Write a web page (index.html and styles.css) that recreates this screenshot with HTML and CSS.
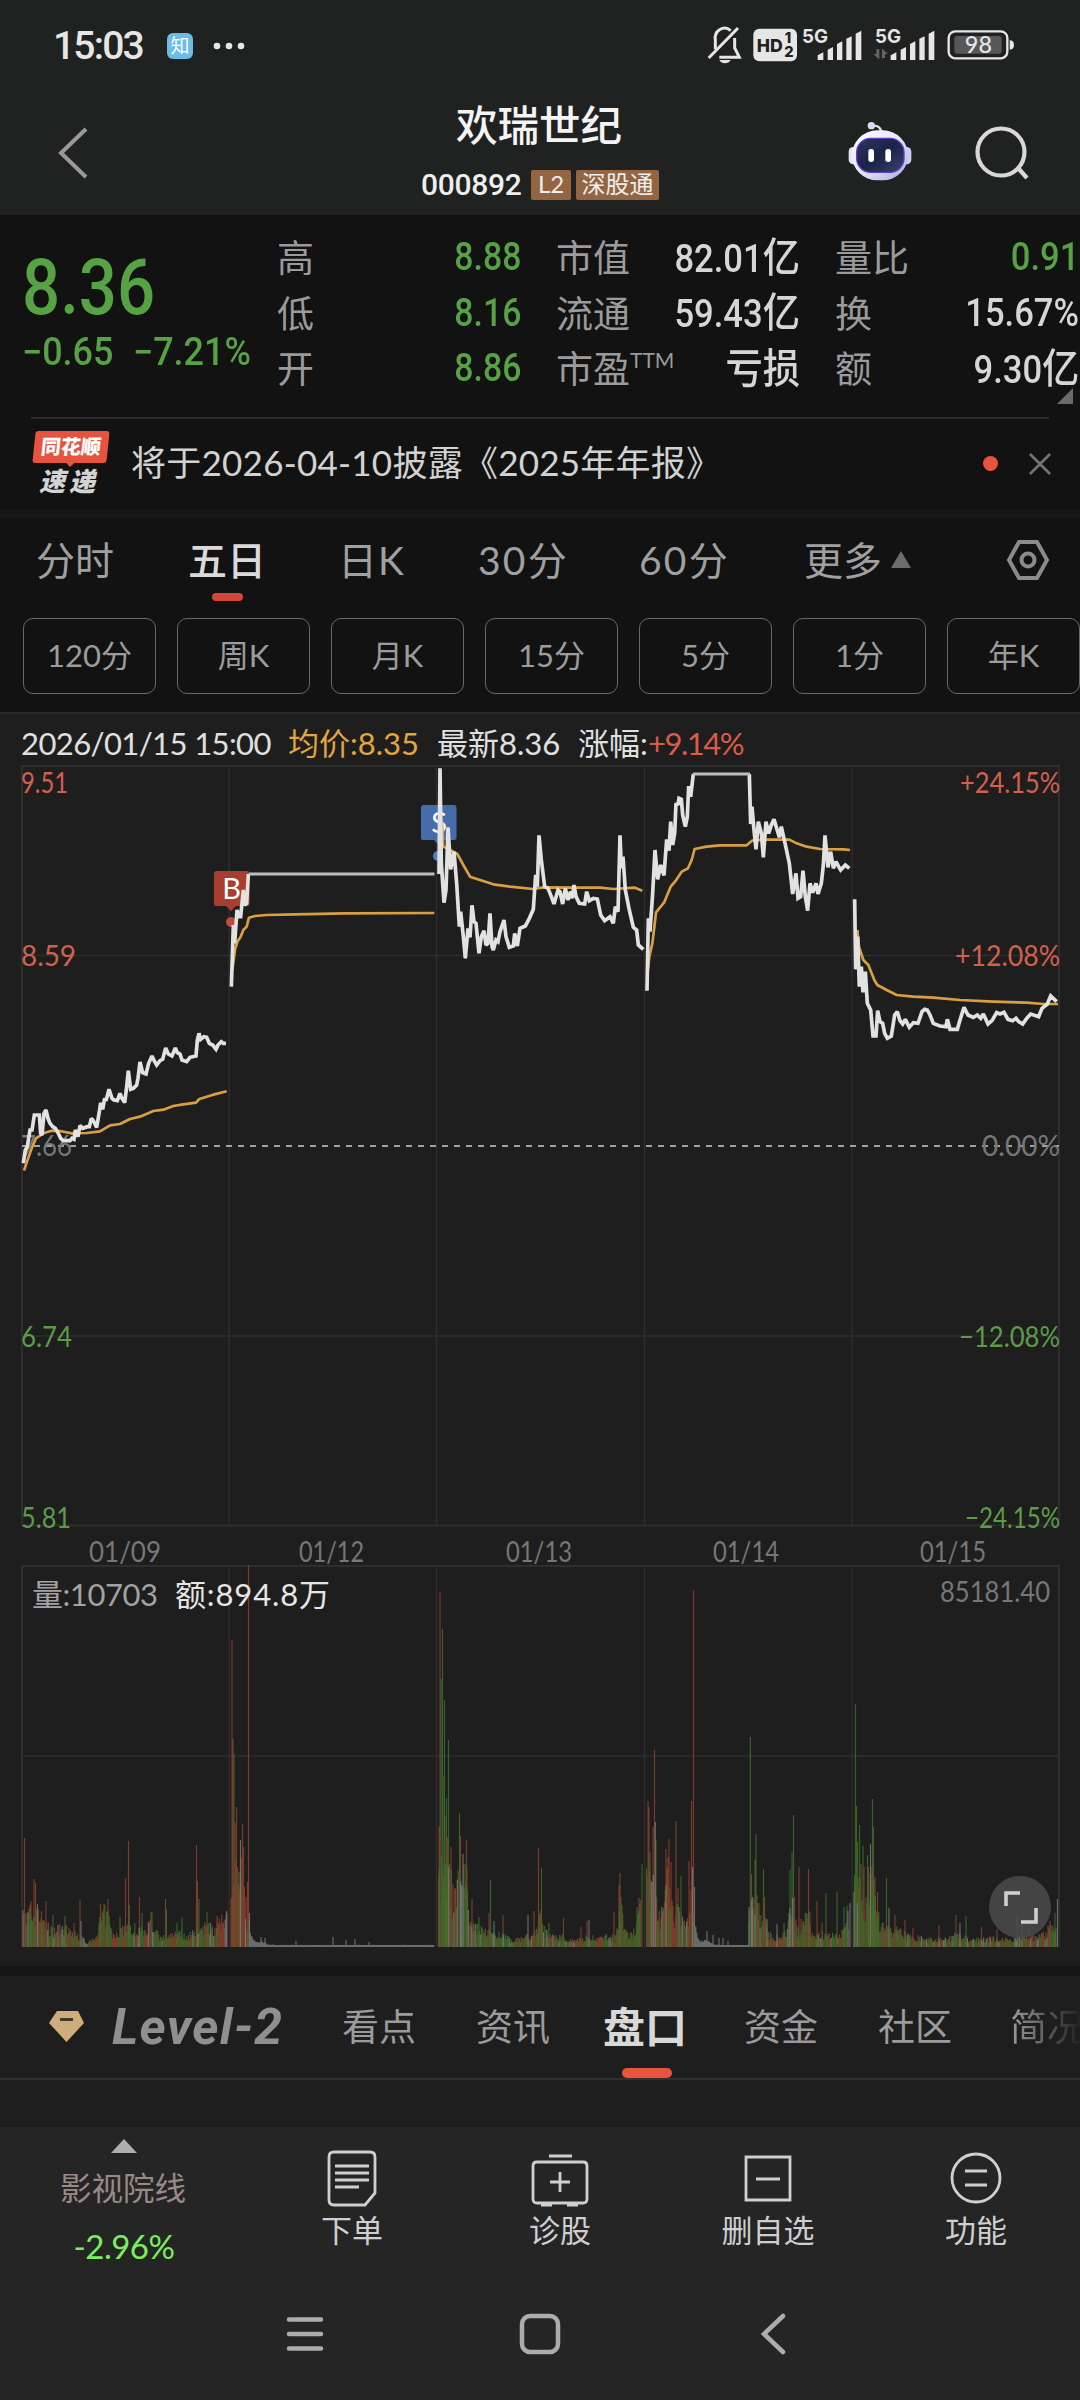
FILE: index.html
```html
<!DOCTYPE html>
<html lang="zh-CN">
<head>
<meta charset="utf-8">
<title>欢瑞世纪 000892</title>
<link rel="stylesheet" href="styles.css">
</head>
<body>
<header class="top">
  <div class="status">
    <span class="clock">15:03</span>
    <span class="app-badge">知</span>
    <svg class="dots" width="34" height="10" viewBox="0 0 34 10"><circle cx="4" cy="5" r="3.3"/><circle cx="16" cy="5" r="3.3"/><circle cx="28" cy="5" r="3.3"/></svg>
    <svg class="status-icons" width="312" height="40" viewBox="0 0 936 120">
      <g fill="none" stroke="#e6e6e6" stroke-width="9">
        <path d="M22 70V42a28 30 0 0 1 46-28M80 36v30l14 28H34"/>
        <path d="M2 96L90 6"/>
      </g>
      <path d="M34 102h34q-6 10-17 10t-17-10z" fill="#e6e6e6"/>
      <rect x="136" y="8" width="131" height="98" rx="18" fill="#e6e6e6"/>
      <g class="st-hd"><text x="146" y="77" font-size="54" textLength="78" lengthAdjust="spacingAndGlyphs">HD</text><text x="230" y="51" font-size="44">1</text><text x="229" y="92" font-size="44">2</text></g>
      <g class="st-5g"><text x="282" y="51" font-size="56" textLength="78" lengthAdjust="spacingAndGlyphs">5G</text><text x="501" y="51" font-size="56" textLength="78" lengthAdjust="spacingAndGlyphs">5G</text></g>
      <g fill="#e6e6e6">
        <path d="M329 102V88l17-9v23zM359 102V71l16-8v39zM387 102V54l16-8v56zM415 102V38l16-7v71zM443 102V23l17-9v88z"/>
        <path d="M548 102V88l17-9v23zM578 102V71l16-8v39zM606 102V54l16-8v56zM634 102V38l16-7v71zM662 102V23l17-9v88z"/>
      </g>
      <path d="M496 84h9V70h9v30zM522 96V68l18 16h-9v12z" fill="#666"/>
      <rect x="722" y="16" width="176" height="81" rx="20" fill="none" stroke="#e6e6e6" stroke-width="7"/>
      <rect x="739" y="30" width="142" height="53" rx="9" fill="#585858"/>
      <path d="M905 43q13 0 13 14t-13 14z" fill="#e6e6e6"/>
      <text class="st-bat" x="811" y="82" font-size="70" text-anchor="middle" textLength="82">98</text>
    </svg>
  </div>
  <div class="titlebar">
    <svg class="back" width="40" height="60" viewBox="0 0 40 60"><path d="M31 6L6 30l25 24"/></svg>
    <div class="title">
      <h1>欢瑞世纪</h1>
      <div class="code"><span class="code-no">000892</span><span class="tag">L2</span><span class="tag tag-wide">深股通</span></div>
    </div>
    <svg class="robot" width="64" height="60" viewBox="0 0 192 180">
      <defs>
        <linearGradient id="shell" x1="0" y1="0" x2="1" y2="1"><stop offset="0" stop-color="#fff"/><stop offset=".55" stop-color="#e4e2f6"/><stop offset="1" stop-color="#a8a4e0"/></linearGradient>
        <linearGradient id="face" x1="0" y1="0" x2="1" y2="1"><stop offset="0" stop-color="#2d3560"/><stop offset=".5" stop-color="#1c2347"/><stop offset="1" stop-color="#3a4170"/></linearGradient>
      </defs>
      <path d="M72 14q26-2 28 20" fill="none" stroke="#dcdaf0" stroke-width="7"/>
      <circle cx="70" cy="14" r="11" fill="#dddaf2"/>
      <rect x="2" y="78" width="30" height="52" rx="14" fill="#e6e5f8"/><rect x="160" y="78" width="30" height="52" rx="14" fill="#cfcdf0"/>
      <rect x="12" y="28" width="168" height="150" rx="76" fill="url(#shell)"/>
      <rect x="26" y="52" width="142" height="102" rx="42" fill="url(#face)" stroke="#5a3fc0" stroke-width="4"/>
      <rect x="61" y="84" width="17" height="39" rx="8" fill="#fff"/><rect x="112" y="84" width="17" height="39" rx="8" fill="#fff"/>
    </svg>
    <svg class="search" width="56" height="56" viewBox="0 0 56 56"><circle cx="27" cy="27" r="23.5"/><path d="M44 43l9 10"/></svg>
  </div>
</header>

<section class="quote">
  <div class="price">
    <div class="last"><span>8.36</span></div>
    <div class="change"><span>−0.65</span><span>−7.21%</span></div>
  </div>
  <dl class="stats c1">
    <div><dt>高</dt><dd class="green">8.88</dd></div>
    <div><dt>低</dt><dd class="green">8.16</dd></div>
    <div><dt>开</dt><dd class="green">8.86</dd></div>
  </dl>
  <dl class="stats c2">
    <div><dt>市值</dt><dd>82.01<b>亿</b></dd></div>
    <div><dt>流通</dt><dd>59.43<b>亿</b></dd></div>
    <div><dt>市盈<sup>TTM</sup></dt><dd><b>亏损</b></dd></div>
  </dl>
  <dl class="stats c3">
    <div><dt>量比</dt><dd class="green">0.91</dd></div>
    <div><dt>换</dt><dd>15.67%</dd></div>
    <div><dt>额</dt><dd>9.30<b>亿</b></dd></div>
  </dl>
  <i class="corner"></i>
</section>

<section class="news">
  <div class="news-logo"><span class="logo-top">同花顺</span><span class="logo-bottom">速递</span></div>
  <p>将于2026-04-10披露《2025年年报》</p>
  <i class="dot"></i>
  <svg width="22" height="22" viewBox="0 0 22 22"><path d="M1 1l20 20M21 1L1 21"/></svg>
</section>

<section class="period">
  <nav class="tabs">
    <span>分时</span><span class="on">五日</span><span>日K</span><span>30分</span><span>60分</span><span class="more">更多</span><i class="up"></i>
    <svg width="42" height="40" viewBox="0 0 42 40"><path d="M12 2h18l10 18-10 18H12L2 20z"/><circle cx="21" cy="20" r="6.5"/></svg>
  </nav>
  <div class="chips"><span>120分</span><span>周K</span><span>月K</span><span>15分</span><span>5分</span><span>1分</span><span>年K</span></div>
</section>

<section class="chart">
  <div class="info"><span class="i1">2026/01/15 15:00</span><span class="i2">均价:8.35</span><span class="i3">最新8.36</span><span class="i4">涨幅:</span><span class="i5">+9.14%</span></div>
  <svg class="plot" width="1080" height="1202" viewBox="0 764 1080 1202">
    <g class="grid">
      <path d="M22 766H1059V1525.5H22zM22 1566H1059V1947M22 1566V1947" stroke-width="2"/>
      <path d="M22 955.5H1059M22 1336H1059M22 1756H1059M229 766V1525M436.5 766V1525M644.5 766V1525M852 766V1525M229 1566V1947M436.5 1566V1947M644.5 1566V1947M852 1566V1947" stroke-width="1.4"/>
    </g>
    <path class="base" d="M22 1146H1059"/>
    <g class="marks">
      <path fill="#a93d30" d="M216 871h31q2.500 0 2.500 2.500v30q0 2.500-2.500 2.500h-11l-5 5-5-5h-10q-2 0-2-2.500v-30q0-2.500 2-2.500z"/>
      <circle cx="231" cy="922" r="5" fill="#c04a3c"/>
      <path fill="#466ca9" d="M423 805h31q2.500 0 2.500 2.500v30q0 2.500-2.500 2.500h-9l-6 5-5-5h-11q-2 0-2-2.500v-30q0-2.500 2-2.500z"/>
      <circle cx="438" cy="856" r="5" fill="#5180c6"/>
      <text x="231.500" y="899" text-anchor="middle">B</text><text x="439" y="833" text-anchor="middle">S</text>
    </g>
    <g class="axis">
      <text class="red" x="21" y="793" textLength="47" lengthAdjust="spacingAndGlyphs">9.51</text>
      <text class="red" x="21" y="966" textLength="55" lengthAdjust="spacingAndGlyphs">8.59</text>
      <text class="gray" x="21" y="1156" textLength="51" lengthAdjust="spacingAndGlyphs">7.66</text>
      <text class="green" x="21" y="1347" textLength="51" lengthAdjust="spacingAndGlyphs">6.74</text>
      <text class="green" x="21" y="1528" textLength="50" lengthAdjust="spacingAndGlyphs">5.81</text>
      <text class="red" x="960" y="793" textLength="100" lengthAdjust="spacingAndGlyphs">+24.15%</text>
      <text class="red" x="955" y="966" textLength="105" lengthAdjust="spacingAndGlyphs">+12.08%</text>
      <text class="gray" x="982" y="1156" textLength="78" lengthAdjust="spacingAndGlyphs">0.00%</text>
      <text class="green" x="959" y="1347" textLength="101" lengthAdjust="spacingAndGlyphs">−12.08%</text>
      <text class="green" x="965" y="1528" textLength="95" lengthAdjust="spacingAndGlyphs">−24.15%</text>
      <g class="gray">
        <text x="89" y="1562" textLength="72" lengthAdjust="spacingAndGlyphs">01/09</text><text x="299" y="1562" textLength="65" lengthAdjust="spacingAndGlyphs">01/12</text><text x="506" y="1562" textLength="66" lengthAdjust="spacingAndGlyphs">01/13</text><text x="713" y="1562" textLength="66" lengthAdjust="spacingAndGlyphs">01/14</text><text x="920" y="1562" textLength="66" lengthAdjust="spacingAndGlyphs">01/15</text>
        <text x="940" y="1602" textLength="110" lengthAdjust="spacingAndGlyphs">85181.40</text>
      </g>
    </g>
    <g class="avg">
      <path transform="translate(0 750) scale(.33333)" d="M72 1262L82 1232 95 1195 108 1165 130 1150 155 1142 180 1143 215 1150 260 1149 300 1144 330 1126 360 1122 390 1107 420 1100 460 1083 490 1079 520 1068 550 1063 588 1058 598 1047 640 1034 680 1024M697 660L705 600 712 575 722 560 730 540 740 530 747 503 765 498 800 495 885 493 1035 490 1303 489"/>
      <path transform="translate(420 750) scale(.33333)" d="M66 215L70 290 90 300 112 312 130 345 150 380 180 390 220 403 270 410 340 417 370 412 470 413 540 413 580 417 645 413 667 422M684 660L688 620 697 580 702 540 708 487 732 458 752 410 765 395 785 365 804 355 815 330 824 297 860 290 900 286 980 286 996 272 1030 269 1108 269 1130 280 1160 290 1200 297 1270 298 1290 300"/>
      <path transform="translate(640 750) scale(.33333)" d="M652 540L657 590 670 630 685 645 703 690 712 705 740 720 770 735 820 740 880 743 960 750 1060 755 1160 758 1210 762 1254 762"/>
    </g>
    <g class="line">
      <path transform="translate(0 750) scale(.33333)" d="M70 1240L76 1200 82 1190 90 1140 96 1140 103 1095 118 1095 122 1150 126 1155 132 1090 138 1080 144 1105 150 1120 158 1130 166 1135 175 1150 182 1165 190 1172 210 1172 216 1165 222 1168 226 1140 234 1160 240 1127 248 1135 262 1130 268 1130 274 1105 280 1112 290 1132 298 1085 302 1058 308 1078 314 1045 318 1052 327 1018 336 1045 342 1050 352 1052 360 1030 366 1045 374 1058 380 1010 385 962 392 1018 400 1015 410 1005 414 985 420 936 428 968 438 972 446 940 456 918 464 935 470 945 480 932 488 928 497 894 505 912 516 918 526 894 532 908 540 912 546 930 560 935 570 922 588 918 592 870 597 850 602 868 612 860 620 862 628 880 638 885 648 898 654 885 664 875 670 880 678 880M694 710L697 620 700 525 704 580 711 480 716 500 722 500 730 420 734 465 740 460 745 372"/>
      <path transform="translate(420 750) scale(.33333)" d="M57 372L60 55 64 340 72 458 78 420 84 232 92 358 102 305 110 400 118 530 122 485 130 560 136 625 144 535 150 562 156 466 162 515 168 520 177 610 184 560 192 542 198 585 204 580 210 490 216 590 220 600 228 570 234 575 240 545 252 510 258 560 268 592 280 588 284 550 292 588 300 535 316 528 328 505 340 478 347 375 352 410 357 256 364 330 374 410 384 415 394 440 402 462 414 420 420 425 428 462 436 415 444 450 452 425 456 445 462 405 468 440 478 460 494 462 500 425 508 452 520 445 532 447 542 495 554 512 570 500 580 520 586 470 594 485 600 256 604 355 609 320 616 420 628 480 640 532 650 540 655 585 670 598M681 722L685 505 690 545 698 430 705 300 713 388 722 345 732 376 740 268 747 302 752 215 758 285 764 250 768 160 774 165 777 145 784 148 788 195 796 230 802 200 806 108 812 140 820 72M988 72L992 222 996 170 1002 240 1008 298 1015 215 1024 250 1030 322 1038 215 1046 250 1054 225 1062 208 1070 235 1078 262 1084 230 1094 275 1108 340 1118 432 1128 370 1134 445 1142 440 1149 362 1156 440 1163 482 1170 400 1178 428 1188 400 1194 432 1204 400 1210 345 1215 256 1224 352 1232 305 1240 355 1248 335 1256 350 1262 360 1276 345 1288 355"/>
      <path transform="translate(640 750) scale(.33333)" d="M644 448L647 658 653 560 658 710 664 650 669 727 676 665 682 760 692 780 699 858 708 858 713 782 720 815 728 820 734 850 742 865 754 858 764 795 772 785 780 812 788 822 796 808 808 832 820 818 834 820 846 785 854 778 862 780 870 795 880 820 900 828 918 830 922 808 930 838 952 838 960 810 972 772 984 795 1000 802 1012 795 1022 805 1030 792 1044 822 1056 812 1070 788 1080 792 1092 787 1104 808 1118 812 1128 805 1136 815 1148 822 1160 805 1172 792 1196 800 1206 775 1222 762 1232 738 1250 755"/>
    </g>
    <path class="limit" d="M249 874H434.500M693 774H750"/>
    <g class="volume"><path id="vr"/><path id="vg"/><path id="vw"/></g>
    <g class="vol-text"><text x="32" y="1606" fill="#a2a2a2" textLength="126">量:10703</text><text x="175" y="1606" fill="#e6e6e6" textLength="155">额:894.8万</text></g>
    <circle cx="1020" cy="1907" r="31" fill="#4a4a4a" fill-opacity=".88"/>
    <path class="expand" d="M1006 1906V1893H1020M1036 1908V1922H1021"/>
  </svg>
</section>

<section class="bottom">
  <nav class="subtabs">
    <svg width="36" height="32" viewBox="0 0 36 32"><path fill="#ceac7b" d="M8 0h21l6 12L17.500 31 0 12z"/><path fill="#42382a" d="M11 7h13v3H11z"/></svg>
    <span class="level">Level-2</span><span>看点</span><span>资讯</span><span class="on">盘口</span><span>资金</span><span>社区</span><span class="fade">简况</span>
  </nav>
</section>

<footer>
  <div class="actions">
    <div class="sector"><i class="up light"></i><span>影视院线</span><b>-2.96%</b></div>
    <div class="act"><svg viewBox="0 0 60 60" width="60" height="60"><path d="M12 4h36q5 0 5 5v36L43 57H12q-5 0-5-5V9q0-5 5-5z"/><path d="M13 18h34M13 25h34M13 32h34M13 39h24"/></svg><span>下单</span></div>
    <div class="act"><svg viewBox="0 0 60 60" width="60" height="60"><path d="M7 14h46q4 0 4 4v33q0 4-4 4H7q-4 0-4-4V18q0-4 4-4zM19 8h23M30 24v20M20 34h20"/><path d="M11 57h11M37 57h11"/></svg><span>诊股</span></div>
    <div class="act"><svg viewBox="0 0 60 60" width="60" height="60"><path d="M8 9h44v43H8zM18 31h24"/></svg><span>删自选</span></div>
    <div class="act"><svg viewBox="0 0 60 60" width="60" height="60"><circle cx="30" cy="30" r="24"/><path d="M19 23h22M19 37h22"/></svg><span>功能</span></div>
  </div>
  <div class="sysnav">
    <svg width="36" height="42" viewBox="0 0 36 42"><path d="M2 6.500h32M2 21h32M2 35.500h32"/></svg>
    <svg width="42" height="42" viewBox="0 0 42 42"><rect x="3" y="3" width="36" height="36" rx="8"/></svg>
    <svg width="26" height="42" viewBox="0 0 26 42"><path d="M22 3L3 21l19 18"/></svg>
  </div>
</footer>
<script src="volume.js"></script>
</body>
</html>
```
FILE: styles.css
```css
* { box-sizing: border-box; }
body { margin: 0; width: 1080px; height: 2400px; overflow: hidden; background: #1e1e1e; color: #d6d6d6; font-family: Lato, "Noto Sans CJK SC", sans-serif; font-kerning: none; }
svg { display: block; flex: none; overflow: visible; }
i { display: block; flex: none; }
span { white-space: nowrap; }

.top { height: 215px; background: #1f2221; }
.status { height: 92px; display: flex; align-items: center; padding-left: 53px; }
.clock { width: 114px; font: 500 39px/46px Roboto; letter-spacing: -1.800px; color: #e6e6e6; }
.app-badge { width: 26px; height: 26px; border-radius: 6px; background: #6dbce8; color: #fff; font-size: 19px; line-height: 25px; text-align: center; }
.dots { margin-left: 20px; fill: #e6e6e6; }
.status-icons { margin-left: 461px; }
.st-hd { font-family: Inter; font-weight: 800; fill: #1f2221; }
.st-5g { font-family: Inter; font-weight: 700; fill: #e6e6e6; }
.st-bat { font-family: Lato; font-weight: 500; fill: #e6e6e6; }

.titlebar { display: flex; height: 123px; position: relative; }
.back { margin: 31px 0 0 55px; fill: none; stroke: #999; stroke-width: 4; }
.title { width: 480px; margin-left: 204px; }
.title h1 { margin: 0; font: 500 41.500px/62px "Noto Sans CJK SC"; color: #f4f4f4; text-align: center; }
.code { display: flex; align-items: center; margin: 16px 0 0 122px; height: 30px; color: #eee; }
.code-no { width: 110px; font: 500 30px/30px Roboto; letter-spacing: -.3px; }
.tag { width: 40px; height: 30px; border-radius: 2px; background: #946541; font: 24px/28px Lato, "Noto Sans CJK SC"; text-align: center; color: #eee; }
.tag-wide { width: 83px; margin-left: 5px; }
.robot { margin: 29px 0 0 69px; }
.search { margin: 33px 0 0 62px; fill: none; stroke: #d8d8d8; stroke-width: 4.200; }

.quote { position: relative; height: 202px; background: #121212; display: flex; }
.price { width: 277px; padding: 32px 0 0 22px; color: #56a244; }
.last { height: 82px; font: 500 78px/82px Roboto; }
.last span { display: inline-block; transform: scaleX(.86); transform-origin: left; }
.change { display: flex; font: 500 38px/48px Roboto; width: 256px; margin-top: -1px; }
.change span { display: inline-block; transform: scaleX(.945); transform-origin: left; width: 111px; }
.stats { margin: 0; padding-top: 15px; }
.stats div { display: flex; justify-content: space-between; height: 55.500px; align-items: center; }
.c1 { width: 244px; } .c2 { width: 244px; margin-left: 35px; } .c3 { width: 244px; margin-left: 35px; }
.stats dt { font-size: 37px; line-height: 55px; color: #9b9b9b; position: relative; }
.stats sup { font-size: 21px; position: absolute; top: -9px; left: 74px; }
.stats dd { margin: 0; font: 500 38px/55px Roboto; transform: scaleX(.91); transform-origin: right; white-space: nowrap; }
.stats b { font: 500 41px/50px "Noto Sans CJK SC"; }
.c1 dd { transform: scaleX(.89); }
.green { color: #56a244; }
.corner { position: absolute; right: 7px; bottom: 13px; border-left: 16px solid transparent; border-bottom: 16px solid #6a6a6a; }

.news { height: 93px; background: #121212; display: flex; align-items: center; position: relative; }
.news::before { content: ""; position: absolute; left: 31px; right: 31px; top: 0; height: 1.500px; background: #2c2c2c; }
.news-logo { width: 74px; margin-left: 34px; height: 66px; }
.news-logo span { display: block; font: italic 900 20px/30px "Noto Sans CJK SC"; color: #fff; text-align: center; }
.news-logo .logo-top { height: 32px; background: #e6543f; border-radius: 3px; transform: skewX(-6deg); font-style: normal; position: relative; }
.logo-top::after { content: ""; position: absolute; left: 33px; top: 31px; border: 5px solid transparent; border-top-color: #e6543f; border-bottom: 0; }
.news-logo .logo-bottom { font-size: 26px; line-height: 34px; color: #d4d4d4; letter-spacing: 4px; padding-right: 4px; }
.news p { margin: 0 0 3px 23px; width: 852px; font-size: 35px; line-height: 50px; letter-spacing: .25px; color: #d2d2d2; white-space: nowrap; }
.dot { width: 15px; height: 15px; border-radius: 50%; background: #e8533f; }
.news svg { margin-left: 31px; stroke: #767676; stroke-width: 2.500; }

.period { border-top: 8px solid #171717; height: 202px; background: #121212; }
.tabs { height: 100px; display: flex; align-items: center; padding: 0 0 17px 36px; font-size: 39px; line-height: 60px; color: #a0a0a0; }
.tabs span { flex: none; width: 161px; }
.tabs span:first-child { width: 152px; }
.tabs .on { width: 150px; color: #dadada; font-weight: 500; position: relative; }
.tabs .on::after { content: ""; position: absolute; left: 24px; top: 63px; width: 31px; height: 8px; border-radius: 4px; background: #d2473a; }
.tabs span:nth-child(3) { width: 140px; letter-spacing: 1px; }
.tabs span:nth-child(4), .tabs span:nth-child(5) { letter-spacing: 2.200px; }
.tabs span:nth-child(5) { width: 165px; }
.tabs .more { width: 87px; }
.tabs svg { margin-left: 96px; fill: none; stroke: #8b8b8b; stroke-width: 4; }
.up { border: 10px solid transparent; border-top: 0; border-bottom: 17px solid #6c6c6c; }
.chips { display: flex; gap: 21px; padding-left: 23px; }
.chips span { flex: none; width: 133px; height: 76px; border: 1.500px solid #686868; border-radius: 10px; text-align: center; font-size: 31px; line-height: 73px; color: #9c9c9c; }

.chart { border-top: 2px solid #2b2b2b; height: 1254px; background: #1e1e1e; }
.info { display: flex; height: 50px; padding: 4px 0 0 21px; font-size: 31px; line-height: 50px; }
.info span { flex: none; color: #e0e0e0; }
.info .i1 { width: 267px; letter-spacing: -.6px; } .info .i2 { width: 149px; color: #e2a63c; } .info .i3 { width: 141px; } .info .i4 { width: 70px; } .info .i5 { color: #dc5a46; letter-spacing: -1.500px; }
.grid { fill: none; stroke: #2e2e2e; }
.base { stroke: #a0a0a0; stroke-width: 1.800; stroke-dasharray: 6 6; }
.marks text { font: 29px Lato; fill: #fff; }
.axis { font: 28px Lato; font-kerning: none; }
.axis .red { fill: #d3604f; } .axis .green { fill: #5c9c49; } .axis .gray { fill: #777; }
.avg path { fill: none; stroke: #d9a043; stroke-width: 8; stroke-linejoin: round; }
.line path { fill: none; stroke: #e2e2e2; stroke-width: 11; stroke-linejoin: miter; stroke-miterlimit: 2; }
.limit { stroke: #bdbdbd; stroke-width: 3; }
.volume path { fill: none; stroke-width: 1.150; stroke-opacity: .82; }
#vr { stroke: #91432f; } #vg { stroke: #3d732c; } #vw { stroke: #7c7c7c; }
.vol-text { font: 31px Lato, "Noto Sans CJK SC"; }
.expand { fill: none; stroke: #cfcfcf; stroke-width: 3.600; }

.bottom { height: 161px; border-top: 10px solid #161616; background: #1e1e1e; }
.subtabs { height: 104px; border-bottom: 2px solid #303030; display: flex; align-items: center; padding: 0 0 0 49px; font-size: 37px; line-height: 60px; color: #9b9b9b; }
.subtabs span { flex: none; width: 134px; }
.subtabs .level { width: 230px; margin-left: 27px; font: italic 700 50px/60px Roboto; color: #8f8f8f; letter-spacing: 1.300px; }
.subtabs span:nth-of-type(3) { width: 127px; }
.subtabs .on { width: 141px; font-size: 42px; font-weight: 700; color: #d8d8d8; position: relative; }
.subtabs .on::after { content: ""; position: absolute; left: 19px; top: 71px; width: 50px; height: 10px; border-radius: 5px; background: #e9543f; }
.subtabs .fade { width: 71px; background: linear-gradient(90deg, #9b9b9b, #222 70px); background-clip: text; -webkit-background-clip: text; color: transparent; margin-left: -2px; }

footer { height: 274px; background: #252525; }
.actions { height: 164px; display: flex; padding-left: 20px; }
.sector { width: 208px; padding: 12px 4px 0 0; display: flex; flex-direction: column; align-items: center; }
.sector .light { border-width: 0 13px 14px; border-bottom-color: #adadad; margin-left: 4px; }
.sector span { font-size: 31.500px; line-height: 44px; margin-top: 13px; margin-left: 2px; color: #988a87; }
.sector b { font: 33px/44px Lato; letter-spacing: -.5px; color: #7cf05c; margin-top: 14px; margin-left: 4px; }
.act { width: 208px; padding-top: 21px; display: flex; flex-direction: column; align-items: center; }
.act:nth-child(2) { margin-left: 20px; }
.act svg { fill: none; stroke: #cfcfcf; stroke-width: 2.800; }
.act span { font-size: 31px; line-height: 44px; color: #cfcfcf; }
.sysnav { display: flex; height: 87px; align-items: center; padding: 0 0 2px 287px; gap: 200px; }
.sysnav svg { fill: none; stroke: #acacac; stroke-width: 4.500; stroke-linecap: round; }
.sysnav svg:nth-child(1) { margin-right: -4px; }
```
FILE: volume.js
```js
// Per-minute turnover: an outline [x, height] for each session plus its peaks.
const BASE = 1947;
const r = 'r', g = 'g', w = 'w';
const sessions = [
  { env: [[23,35],[30,40],[40,35],[50,20],[64,22],[80,12],[88,5],[95,10],[103,40],[108,38],[113,12],[125,25],[135,22],[145,22],[152,28],[160,10],[170,15],[180,20],[185,12],[195,18],[205,25],[215,20],[222,30],[227,33]], bias: .58 },
  { env: [[231,55],[234,110],[238,75],[241,85],[246,40],[249,25]], bias: .9 },
  { env: [[249.500,16],[252,11],[256,6],[265,5],[268,3],[275,2],[434,2]], quiet: true },
  { env: [[438.500,90],[450,90],[452,60],[455,55],[460,85],[466,70],[470,30],[475,22],[490,18],[505,12],[515,8],[530,14],[537,20],[540,40],[543,22],[550,12],[560,12],[575,8],[590,12],[600,10],[616,14],[621,45],[624,22],[630,13],[636,22],[641,45]], bias: .42 },
  { env: [[646.500,80],[653,88],[656,60],[659,38],[664,40],[667,75],[671,70],[674,35],[676,45],[680,35],[686,25],[689,50],[692,65],[694,34]], bias: .75 },
  { env: [[695,26],[697,12],[700,6],[707,7],[712,3],[720,2],[748,2]], quiet: true },
  { env: [[749,40],[752,45],[756,60],[759,35],[764,35],[768,15],[775,12],[782,12],[788,22],[792,60],[795,30],[800,16],[808,40],[812,15],[820,15],[830,14],[840,16],[849,35]], bias: .5 },
  { env: [[854,75],[862,65],[866,45],[872,85],[875,50],[878,35],[882,25],[890,20],[900,18],[910,12],[925,10],[945,10],[960,15],[970,8],[990,10],[1010,9],[1030,12],[1045,14],[1057,30]], bias: .5 }
];
const peaks = [
  [24.5,109,r],[34,68,r],[35.5,64,r],[31,46,r],[37.5,43,w],[46,46,r],[41.5,36,r],[53,32,g],[65,31,g],[80,47,r],[81,26,w],[74,24,r],[100.5,43,r],[108,48,r],[125.5,69,r],[128.5,106,r],[129.3,42,g],[139.5,50,r],[142,34,g],[120,30,g],[151,35,r],[152,35,g],[165.5,48,r],[166.5,38,g],[177,24,g],[182,30,g],[196.5,102,r],[197.5,66,r],[199,48,g],[207,35,g],[217,31,r],[226.5,36,w],
  [232,307,r],[233,208,r],[234,193,g],[235,125,r],[236.5,140,r],[237.5,80,r],[239,75,g],[240.5,107,w],[242.5,123,r],[243.5,100,r],[244.5,60,r],[246,50,r],[247.5,65,r],[248.5,382,r],[249.5,34,w],[261,10,w],[265,9,w],[296,6,w],[333,10,w],[346,7,w],[355,8,w],[369,5,w],
  [439,120,r],[440,355,r],[441,268,g],[442.5,318,g],[443,171,g],[444.5,247,g],[445,131,r],[446.5,149,g],[448.5,207,g],[447.5,110,r],[451,100,r],[453,60,r],[459.5,134,g],[460.5,111,r],[463,93,w],[465,83,g],[466.5,107,r],[467,80,r],[472,48,r],[479,30,g],[489,34,r],[490.5,67,g],[494,26,w],[503,32,r],[528,32,w],[534,36,r],[538.5,99,r],[541.5,79,g],[549,24,g],[563.5,29,r],[581,20,r],[587,26,r],[589,27,w],[614,35,r],[619,62,r],[620,74,r],[621,50,g],[637,40,g],[639,49,r],[642,83,g],
  [648,146,r],[649,140,r],[650,95,g],[653,120,r],[654.5,197,r],[655.3,125,w],[656,107,g],[666,98,r],[668,90,r],[669,108,r],[671,85,r],[676,126,r],[678,59,r],[681,71,g],[689,86,r],[691.5,146,r],[692.5,80,w],[693.5,357,r],[694.5,60,w],[707,16,w],[713,12,w],[719,9,w],[723,9,w],[728,6,w],
  [749,40,w],[750.3,210,g],[751.5,73,r],[752.5,50,w],[755,87,g],[756,113,g],[757,52,r],[759,44,r],[763.5,78,g],[764.5,50,r],[767,28,w],[777,23,w],[784,24,g],[790,77,g],[792,95,g],[793.5,132,g],[794.5,50,r],[799,80,r],[801,28,r],[808.5,78,r],[810,35,r],[817,46,r],[822,24,r],[826,54,g],[837,55,g],[844,40,g],[847,41,g],[850,44,w],
  [854.5,72,g],[855.5,243,g],[856.5,141,g],[857.5,105,g],[859.5,122,g],[861,83,r],[863,101,g],[864,80,r],[867.5,92,g],[868.5,80,r],[870.5,103,w],[872.5,148,g],[873.5,120,g],[875,70,r],[877.5,55,r],[886.5,69,g],[889,39,w],[895,32,r],[905,27,r],[913,19,r],[939,22,r],[956,32,r],[960,24,w],[966,31,g],[981.5,20,r],[997,18,r],[1017,31,w],[1022,28,w],[1029,27,r],[1048,22,r],[1050,26,r],[1055,34,g],[1057.5,48,w]
];

let seed = 7;
const rand = () => (seed = (seed * 16807) % 2147483647) / 2147483647;
const d = { r: '', g: '', w: '' };
const bar = (x, h, c) => { d[c] += `M${x.toFixed(2)} ${BASE}V${(BASE - h).toFixed(1)}`; };

for (const { env, bias, quiet } of sessions) {
  let k = 0;
  for (let x = env[0][0]; x <= env[env.length - 1][0]; x += .853) {
    while (k < env.length - 2 && env[k + 1][0] < x) k++;
    const [x0, h0] = env[k], [x1, h1] = env[k + 1];
    const h = h0 + (h1 - h0) * (x - x0) / (x1 - x0);
    if (quiet) { bar(x, Math.max(2, h * (.7 + rand() * .4)), 'w'); continue; }
    const p = rand();
    const c = p < .1 ? 'w' : rand() < bias ? 'r' : 'g';
    bar(x, h * (.45 + rand() * .65), c);
  }
}
for (const [x, h, c] of peaks) bar(x, h, c);
for (const c of ['r', 'g', 'w']) document.getElementById('v' + c).setAttribute('d', d[c]);
```
